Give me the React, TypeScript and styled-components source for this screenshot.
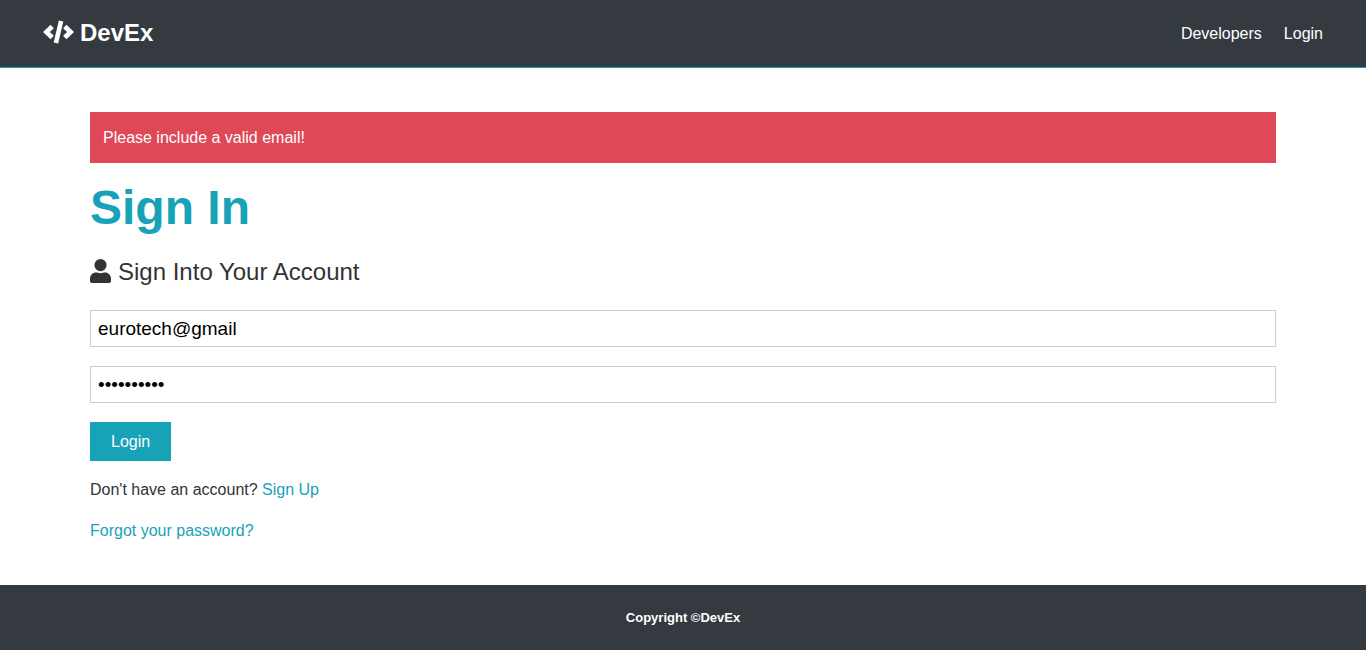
import React from "react";
import styled, { createGlobalStyle } from "styled-components";

const GlobalStyle = createGlobalStyle`
  * { box-sizing: border-box; margin: 0; padding: 0; }
  body {
    font-family: "Liberation Sans", Arial, sans-serif;
    font-size: 16px;
    line-height: 26px;
    color: #333;
    background: #fff;
  }
  a { text-decoration: none; color: #17a2b8; }
`;

const Page = styled.div`
  min-height: 100vh;
  display: flex;
  flex-direction: column;
`;

const Navbar = styled.nav`
  display: flex;
  justify-content: space-between;
  align-items: center;
  height: 68px;
  padding: 0 32px;
  background: #343a40;
  border-bottom: 1px solid #17a2b8;
`;

const Brand = styled.a`
  && { color: #fff; }
  display: flex;
  align-items: center;
  gap: 6px;
  padding: 0 11px 2px;
  font-size: 24px;
  font-weight: bold;
`;

const CodeIcon = styled.svg`
  width: 31px;
  height: 24px;
  margin-bottom: 2px;
  fill: none;
  stroke: currentColor;
`;

const UserIcon = styled.svg`
  width: 21px;
  height: 24px;
  margin-bottom: 2px;
  fill: currentColor;
`;

const NavLinks = styled.ul`
  display: flex;
  list-style: none;
`;

const NavLink = styled.a`
  && { color: #fff; }
  padding: 0 11px;
`;

const Main = styled.main`
  flex: 1;
  padding: 44px 90px 24px;
`;

const Alert = styled.div`
  padding: 13px 13px 12px;
  margin-bottom: 16px;
  background: #dc3545;
  color: #fff;
  opacity: 0.9;
`;

const Title = styled.h1`
  margin-bottom: 16px;
  font-size: 48px;
  line-height: 58px;
  color: #17a2b8;
`;

const Lead = styled.p`
  display: flex;
  align-items: center;
  gap: 7px;
  margin-bottom: 19px;
  font-size: 24px;
  line-height: 38px;
`;

const Form = styled.form`
  display: flex;
  flex-direction: column;
  align-items: flex-start;
  gap: 19px;
  margin-bottom: 16px;
`;

const Field = styled.input`
  width: 100%;
  height: 37px;
  padding: 6px 7px;
  border: 1px solid #ccc;
  font-family: inherit;
  font-size: 19px;
  color: #000;
  outline: none;
`;

const Submit = styled.button`
  height: 39px;
  padding: 0 21px;
  border: none;
  background: #17a2b8;
  color: #fff;
  font-family: inherit;
  font-size: 16px;
`;

const Note = styled.p`
  margin-bottom: 15px;
`;

const Footer = styled.footer`
  padding: 20px;
  background: #343a40;
  color: #fff;
  text-align: center;
  font-size: 13px;
  font-weight: bold;
  line-height: 25px;
`;

export default function App() {
  return (
    <Page>
      <GlobalStyle />
      <Navbar>
        <Brand href="#home">
          <CodeIcon viewBox="0 0 31 24" aria-hidden="true">
            <path d="M9.2 6.5 3.4 12l5.8 5.5M21.8 6.5l5.8 5.5-5.8 5.5" strokeWidth="4.8" />
            <path d="M18.1 1 12.9 23" strokeWidth="4.6" />
          </CodeIcon>
          DevEx
        </Brand>
        <NavLinks>
          <li><NavLink href="#developers">Developers</NavLink></li>
          <li><NavLink href="#login">Login</NavLink></li>
        </NavLinks>
      </Navbar>
      <Main>
        <Alert role="alert">Please include a valid email!</Alert>
        <Title>Sign In</Title>
        <Lead>
          <UserIcon viewBox="0 0 21 24" aria-hidden="true">
            <circle cx="10.5" cy="6.1" r="6.1" />
            <path d="M6 13.5h1.2c2 .9 4.6.9 6.6 0H15c3.3 0 6 2.7 6 6V22c0 1.2-.9 2-2 2H2c-1.1 0-2-.8-2-2v-2.5c0-3.3 2.7-6 6-6Z" />
          </UserIcon>
          Sign Into Your Account
        </Lead>
        <Form noValidate onSubmit={(e) => e.preventDefault()}>
          <Field type="email" aria-label="Email Address" defaultValue="eurotech@gmail" />
          <Field type="password" aria-label="Password" defaultValue="eurotech12" />
          <Submit type="submit">Login</Submit>
        </Form>
        <Note>Don't have an account? <a href="#register">Sign Up</a></Note>
        <Note><a href="#forgot">Forgot your password?</a></Note>
      </Main>
      <Footer>Copyright ©DevEx</Footer>
    </Page>
  );
}
